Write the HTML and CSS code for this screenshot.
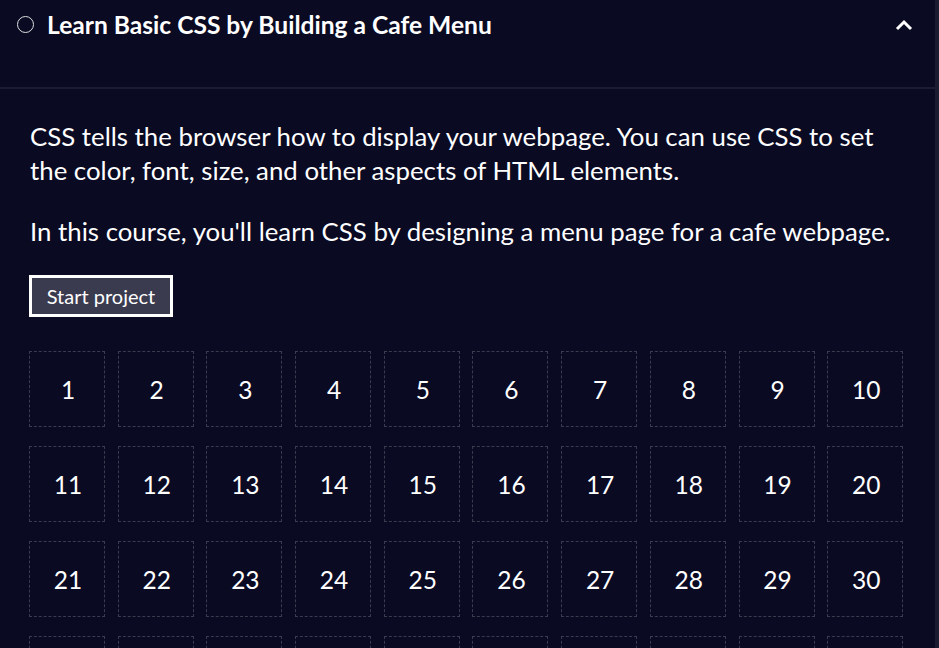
FILE: index.html
```html
<!DOCTYPE html>
<html lang="en">
<head>
<meta charset="utf-8">
<link rel="stylesheet" href="styles.css">
</head>
<body>
<div class="block">
  <div class="block-header">
    <span class="status-circle"></span>
    <h2 class="block-title">Learn Basic CSS by Building a Cafe Menu</h2>
    <svg class="caret" width="18" height="12" viewBox="0 0 18 12"><polyline points="2,10 9,3 16,10" fill="none" stroke="#ffffff" stroke-width="3"/></svg>
  </div>
  <div class="block-body">
    <p class="desc">CSS tells the browser how to display your webpage. You can use CSS to set the color, font, size, and other aspects of HTML elements.</p>
    <p class="desc">In this course, you'll learn CSS by designing a menu page for a cafe webpage.</p>
    <button class="start-btn">Start project</button>
    <div class="steps">
      <a class="step">1</a><a class="step">2</a><a class="step">3</a><a class="step">4</a><a class="step">5</a><a class="step">6</a><a class="step">7</a><a class="step">8</a><a class="step">9</a><a class="step">10</a>
      <a class="step">11</a><a class="step">12</a><a class="step">13</a><a class="step">14</a><a class="step">15</a><a class="step">16</a><a class="step">17</a><a class="step">18</a><a class="step">19</a><a class="step">20</a>
      <a class="step">21</a><a class="step">22</a><a class="step">23</a><a class="step">24</a><a class="step">25</a><a class="step">26</a><a class="step">27</a><a class="step">28</a><a class="step">29</a><a class="step">30</a>
      <a class="step">31</a><a class="step">32</a><a class="step">33</a><a class="step">34</a><a class="step">35</a><a class="step">36</a><a class="step">37</a><a class="step">38</a><a class="step">39</a><a class="step">40</a>
    </div>
  </div>
</div>
</body>
</html>
```
FILE: styles.css
```css
html, body {
  margin: 0;
  padding: 0;
  background: #0a0a23;
  color: #ffffff;
  font-family: Lato, "Noto Sans", sans-serif;
  overflow: hidden;
  height: 648px;
}
.block {
  width: 935px;
  border-right: 4px solid #1b1b32;
  height: 648px;
  overflow: hidden;
}
.block-header {
  display: flex;
  align-items: center;
  height: 89px;
  box-sizing: border-box;
  padding: 0 22px 38px 17px;
  border-bottom: 2px solid #1b1b32;
}
.status-circle {
  width: 15px;
  height: 15px;
  border: 1px solid #dfdfe2;
  border-radius: 50%;
  flex: none;
  margin-right: 13px;
}
.block-title {
  margin: 0;
  font-size: 24.6px;
  font-weight: 700;
  flex: 1;
  line-height: 1.2;
}
.caret {
  flex: none;
}
.block-body {
  padding: 30px 30px 0 30px;
}
.desc {
  margin: 0 0 27px 0;
  font-size: 25.8px;
  line-height: 34px;
}
.start-btn {
  display: block;
  margin: 0 0 34px -1px;
  width: 144px;
  height: 42px;
  background: #3b3b4f;
  border: 3px solid #ffffff;
  color: #ffffff;
  font-family: Lato, "Noto Sans", sans-serif;
  font-size: 20px;
  padding: 0;
}
.steps {
  display: grid;
  grid-template-columns: repeat(10, 76px);
  column-gap: 12.7px;
  row-gap: 19px;
  margin-left: -1px;
}
.step {
  height: 76px;
  box-sizing: border-box;
  border: 1px dashed #3b3b4f;
  display: flex;
  align-items: center;
  justify-content: center;
  padding-left: 2px;
  font-size: 24.5px;
}
```
